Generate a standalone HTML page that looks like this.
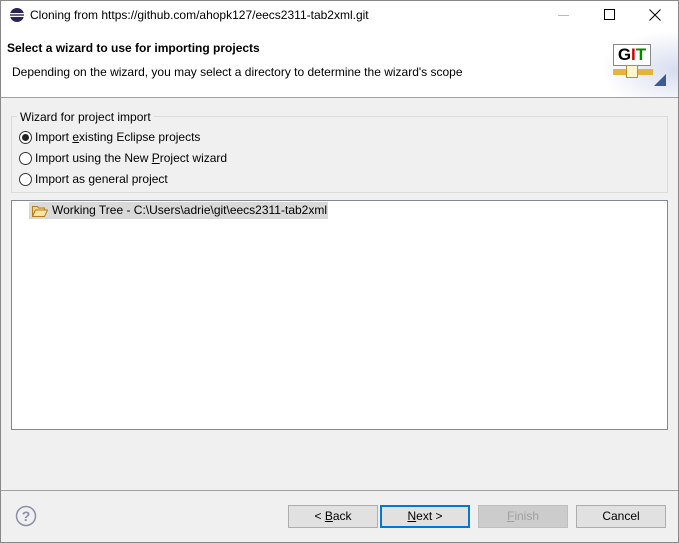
<!DOCTYPE html>
<html><head><style>
*{margin:0;padding:0;box-sizing:border-box}
body{width:679px;height:543px;overflow:hidden;font-family:"Liberation Sans",sans-serif;font-size:12px;color:#000;background:#f0f0f0;position:relative}
.win{position:absolute;left:0;top:0;width:679px;height:543px;border:1px solid #888;}
.abs{position:absolute;white-space:nowrap}
.btn{position:absolute;top:505px;height:23px;width:90px;border:1px solid #adadad;background:#e1e1e1;text-align:center;line-height:21px;font-size:12px}
.radio{position:absolute;width:13px;height:13px;border:1px solid #333;border-radius:50%;background:#fff}
</style></head><body>
<div class="win"></div>
<div class="abs" style="left:1px;top:1px;width:677px;height:96px;background:#fff"></div>
<div class="abs" style="left:1px;top:97px;width:677px;height:1px;background:#a0a0a0"></div>
<svg class="abs" style="left:9px;top:7px" width="16" height="16" viewBox="0 0 16 16"><circle cx="8" cy="8" r="7" fill="#2c2255"/><rect x="1" y="6" width="14" height="1.3" fill="#fff"/><rect x="1" y="8.7" width="14" height="1.3" fill="#fff"/></svg>
<div class="abs" style="left:30px;top:8px;font-size:12px">Cloning from https://github.com/ahopk127/eecs2311-tab2xml.git</div>
<div class="abs" style="left:558px;top:15px;width:11px;height:1px;background:#bbb"></div>
<div class="abs" style="left:604px;top:9px;width:11px;height:11px;border:1px solid #000"></div>
<svg class="abs" style="left:649px;top:9px" width="12" height="12"><path d="M0.5 0.5L11.5 11.5M11.5 0.5L0.5 11.5" stroke="#000" stroke-width="1"/></svg>
<div class="abs" style="left:7px;top:41px;font-weight:bold;font-size:12px">Select a wizard to use for importing projects</div>
<div class="abs" style="left:12px;top:65px;font-size:12px">Depending on the wizard, you may select a directory to determine the wizard's scope</div>
<div class="abs" style="left:600px;top:30px;width:78px;height:67px;background:radial-gradient(ellipse at 100% 60%,#d7dcef 0%,#eef0f8 40%,#fff 70%)"></div>
<div class="abs" style="left:613px;top:44px;width:38px;height:22px;border:1px solid #888;background:#fff;font-weight:bold;font-size:17px;line-height:20px;text-align:center"><span>G</span><span style="color:#c00">I</span><span style="color:#080">T</span></div>
<div class="abs" style="left:613px;top:69px;width:40px;height:6px;background:#e8b33a"></div>
<div class="abs" style="left:626px;top:65px;width:12px;height:13px;background:#fff6d0;border:1px solid #b8902a"></div>
<svg class="abs" style="left:654px;top:74px" width="12" height="12"><polygon points="12,0 12,12 0,12" fill="#3a5a9a"/></svg>
<div class="abs" style="left:11px;top:116px;width:657px;height:77px;border:1px solid #dcdcdc"></div>
<div class="abs" style="left:17px;top:110px;background:#f0f0f0;padding:0 3px">Wizard for project import</div>
<div class="radio" style="left:19px;top:131px"><div style="position:absolute;left:2px;top:2px;width:7px;height:7px;border-radius:50%;background:#222"></div></div>
<div class="abs" style="left:35px;top:130px">Import <u>e</u>xisting Eclipse projects</div>
<div class="radio" style="left:19px;top:152px"></div>
<div class="abs" style="left:35px;top:151px">Import using the New <u>P</u>roject wizard</div>
<div class="radio" style="left:19px;top:173px"></div>
<div class="abs" style="left:35px;top:172px">Import as <u>g</u>eneral project</div>
<div class="abs" style="left:11px;top:200px;width:657px;height:230px;border:1px solid #828790;background:#fff"></div>
<div class="abs" style="left:29px;top:202px;width:299px;height:17px;background:#d9d9d9"></div>
<svg class="abs" style="left:32px;top:204px" width="16" height="13" viewBox="0 0 16 13"><path d="M0.5 2.5h5l1 1.5h6v2H3.5l-3 6z" fill="#f6d58a" stroke="#b07e22"/><path d="M3.5 6h12l-3 6.5H0.5z" fill="#fbe3a6" stroke="#b07e22"/></svg>
<div class="abs" style="left:52px;top:203px">Working Tree - C:\Users\adrie\git\eecs2311-tab2xml</div>
<div class="abs" style="left:1px;top:490px;width:677px;height:1px;background:#a0a0a0"></div>
<svg class="abs" style="left:15px;top:505px" width="22" height="22"><circle cx="11" cy="11" r="9.5" fill="none" stroke="#8a8fa6" stroke-width="1.5"/><text x="11" y="16" text-anchor="middle" font-family="Liberation Sans" font-size="14" font-weight="bold" fill="#8a8fa6">?</text></svg>
<div class="btn" style="left:288px">&lt; <u>B</u>ack</div>
<div class="btn" style="left:380px;border:2px solid #0078d7;line-height:19px"><u>N</u>ext &gt;</div>
<div class="btn" style="left:478px;background:#ccc;border-color:#bfbfbf;color:#a0a0a0"><u>F</u>inish</div>
<div class="btn" style="left:576px">Cancel</div>
</body></html>
